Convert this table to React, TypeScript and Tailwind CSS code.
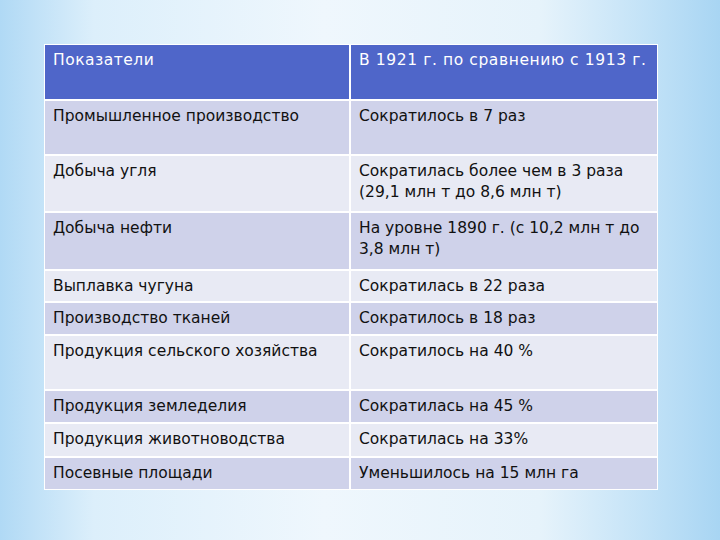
const rows: { a: string; b: string; h: string }[] = [
  { a: "Промышленное производство", b: "Сократилось в 7 раз", h: "h-[53px]" },
  { a: "Добыча угля", b: "Сократилась более чем в 3 раза (29,1 млн т до 8,6 млн т)", h: "h-[55px]" },
  { a: "Добыча нефти", b: "На уровне 1890 г. (с 10,2 млн т до 3,8 млн т)", h: "h-[56px]" },
  { a: "Выплавка чугуна", b: "Сократилась в 22 раза", h: "h-[30px]" },
  { a: "Производство тканей", b: "Сократилось в 18 раз", h: "h-[31px]" },
  { a: "Продукция сельского хозяйства", b: "Сократилось на 40 %", h: "h-[53px]" },
  { a: "Продукция земледелия", b: "Сократилась на 45 %", h: "h-[31px]" },
  { a: "Продукция животноводства", b: "Сократилась на 33%", h: "h-[32px]" },
  { a: "Посевные площади", b: "Уменьшилось на 15 млн га", h: "h-[31px]" },
];

export default function App() {
  return (
    <div className="w-[720px] h-[540px] overflow-hidden bg-[linear-gradient(90deg,#b0d9f5_0%,#dceffb_13%,#eff7fd_45%,#e6f3fb_75%,#c2e2f7_90%,#a8d5f3_100%)] pt-[44px] pl-[44px] font-['DejaVu_Sans',sans-serif] text-[15.5px] leading-[21px]">
      <div className="w-[614px] bg-white p-[1px] flex flex-col gap-[2px]">
        <div className="h-[54px] grid grid-cols-[304px_306px] gap-[2px]">
          <div className="bg-[#4f66c9] text-white pl-[8px] pt-[5px] tracking-[0.5px]">Показатели</div>
          <div className="bg-[#4f66c9] text-white pl-[8px] pt-[5px] tracking-[0.6px] whitespace-nowrap">В 1921 г. по сравнению с 1913 г.</div>
        </div>
        {rows.map((r, i) => (
          <div key={i} className={`${r.h} grid grid-cols-[304px_306px] gap-[2px]`}>
            <div className={`${i % 2 === 0 ? "bg-[#cfd2ea]" : "bg-[#e8eaf4]"} text-[#111] pl-[8px] pt-[5px]`}>{r.a}</div>
            <div className={`${i % 2 === 0 ? "bg-[#cfd2ea]" : "bg-[#e8eaf4]"} text-[#111] pl-[8px] pr-[6px] pt-[5px]`}>{r.b}</div>
          </div>
        ))}
      </div>
    </div>
  );
}
